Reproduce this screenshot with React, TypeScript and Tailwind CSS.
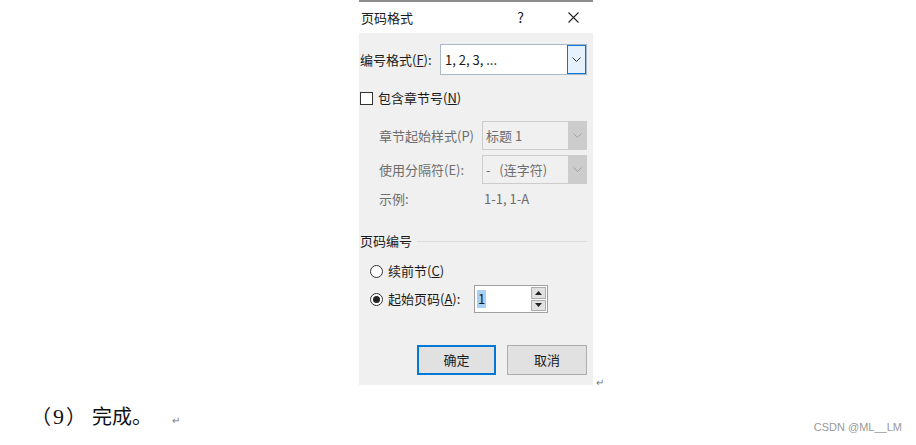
import React from 'react';

const ui = { fontFamily: '"Noto Sans CJK SC", "Noto Sans", sans-serif' };

const Chevron = ({ color = '#333' }: { color?: string }) => (
  <svg width="9" height="6" viewBox="0 0 9 6">
    <path d="M0.5 0.5 L4.5 4.5 L8.5 0.5" fill="none" stroke={color} strokeWidth="1" />
  </svg>
);

const DisabledCombo = ({ text }: { text: string }) => (
  <div className="flex h-[29px] w-[105px] border border-[#cccccc] bg-[#f0f0f0]">
    <div className="flex flex-1 items-center whitespace-pre pl-[3px] text-[13px] text-[#6d6d6d]">{text}</div>
    <div className="flex w-[18px] items-center justify-center bg-[#cccccc]">
      <Chevron color="#a0a0a0" />
    </div>
  </div>
);

export default function App() {
  return (
    <div className="relative h-[445px] w-[916px] overflow-hidden bg-white" style={ui}>
      <div className="flex items-end">
        <div className="ml-[359px] w-[234px]">
          <div className="h-[2px] bg-[#8c8c8c]" />
          {/* title bar */}
          <div className="flex h-[31px] items-center bg-white text-[13px] text-[#1a1a1a]">
            <span className="ml-[2px]">页码格式</span>
            <span className="ml-auto mr-[44px] text-[14px]">?</span>
            <svg width="11" height="11" viewBox="0 0 11 11" className="mr-[14px]">
              <path d="M0.5 0.5 L10.5 10.5 M10.5 0.5 L0.5 10.5" stroke="#222" strokeWidth="1.1" />
            </svg>
          </div>
          {/* body */}
          <div className="flex h-[352px] flex-col bg-[#f0f0f0] text-[13px] text-[#1a1a1a]">
            <div className="mt-[11px] flex h-[31px] items-center">
              <span className="ml-[1px] w-[80px]">
                编号格式(<span className="underline">F</span>):
              </span>
              <div className="flex h-[31px] w-[147px] border border-[#a9b8c8] bg-white">
                <div className="flex flex-1 items-center pl-[4px]">1, 2, 3, ...</div>
                <div className="flex w-[19px] items-center justify-center border border-[#0078d7] bg-[#e5f1fb]">
                  <Chevron />
                </div>
              </div>
            </div>

            <div className="mt-[15px] flex h-[16px] items-center">
              <div className="ml-[1px] h-[13px] w-[13px] border border-[#333] bg-white" />
              <span className="ml-[5px]">
                包含章节号(<span className="underline">N</span>)
              </span>
            </div>

            <div className="mt-[15px] flex h-[29px] items-center">
              <span className="ml-[20px] w-[103px] text-[#6d6d6d]">章节起始样式(P)</span>
              <DisabledCombo text="标题 1" />
            </div>
            <div className="mt-[5px] flex h-[29px] items-center">
              <span className="ml-[20px] w-[103px] text-[#6d6d6d]">使用分隔符(E):</span>
              <DisabledCombo text="-   (连字符)" />
            </div>
            <div className="mt-[5px] flex h-[20px] items-center text-[#6d6d6d]">
              <span className="ml-[20px] w-[105px]">示例:</span>
              <span>1-1, 1-A</span>
            </div>

            <div className="mt-[22px] flex h-[20px] items-center">
              <span className="ml-[1px]">页码编号</span>
              <div className="ml-[5px] mr-[6px] h-px flex-1 bg-[#dcdcdc]" />
            </div>

            <div className="mt-[10px] flex h-[20px] items-center">
              <div className="ml-[11px] h-[13px] w-[13px] rounded-full border border-[#333] bg-white" />
              <span className="ml-[5px]">
                续前节(<span className="underline">C</span>)
              </span>
            </div>
            <div className="mt-[4px] flex h-[28px] items-center">
              <div className="ml-[11px] flex h-[13px] w-[13px] items-center justify-center rounded-full border border-[#333] bg-white">
                <div className="h-[7px] w-[7px] rounded-full bg-[#222]" />
              </div>
              <span className="ml-[5px] w-[86px]">
                起始页码(<span className="underline">A</span>):
              </span>
              <div className="flex h-[28px] w-[74px] border border-[#a0a0a0] bg-white">
                <div className="flex flex-1 items-center pl-[2px]">
                  <span className="bg-[#a8d1f5] px-[1px] leading-[18px]">1</span>
                </div>
                <div className="flex w-[17px] flex-col gap-px p-px">
                  <div className="flex flex-1 items-center justify-center border border-[#adadad] bg-[#e1e1e1]">
                    <svg width="7" height="4" viewBox="0 0 7 4">
                      <path d="M0 4 L3.5 0 L7 4 Z" fill="#222" />
                    </svg>
                  </div>
                  <div className="flex flex-1 items-center justify-center border border-[#adadad] bg-[#e1e1e1]">
                    <svg width="7" height="4" viewBox="0 0 7 4">
                      <path d="M0 0 L3.5 4 L7 0 Z" fill="#222" />
                    </svg>
                  </div>
                </div>
              </div>
            </div>

            <div className="mt-[32px] flex h-[30px] items-stretch">
              <button className="ml-[58px] w-[79px] border-2 border-[#0078d7] bg-[#e1e1e1] text-[13px] text-[#1a1a1a]">
                确定
              </button>
              <button className="ml-[11px] w-[80px] border border-[#adadad] bg-[#e1e1e1] text-[13px] text-[#1a1a1a]">
                取消
              </button>
            </div>
          </div>
        </div>
        <span className="mb-[-2px] ml-[3px] text-[10px] leading-none text-[#777]">↵</span>
      </div>

      <div className="mt-[18px] flex items-center">
        <div
          className="ml-[31px] flex items-baseline text-[20px] font-normal leading-[28px] text-[#111]"
          style={{ fontFamily: '"Liberation Serif", "Noto Sans CJK SC", serif' }}
        >
          <span>（</span>
          <span className="ml-[2px] text-[22px]">9</span>
          <span className="ml-[2px]">）</span>
          <span className="ml-[6px]">完成。</span>
        </div>
        <span className="ml-[20px] mt-[6px] text-[10px] leading-none text-[#777]">↵</span>
      </div>

      <div
        className="absolute bottom-[10px] right-[14px] text-[11px] text-[#999]"
        style={{ fontFamily: '"Liberation Sans", sans-serif' }}
      >
        CSDN @ML__LM
      </div>
    </div>
  );
}
